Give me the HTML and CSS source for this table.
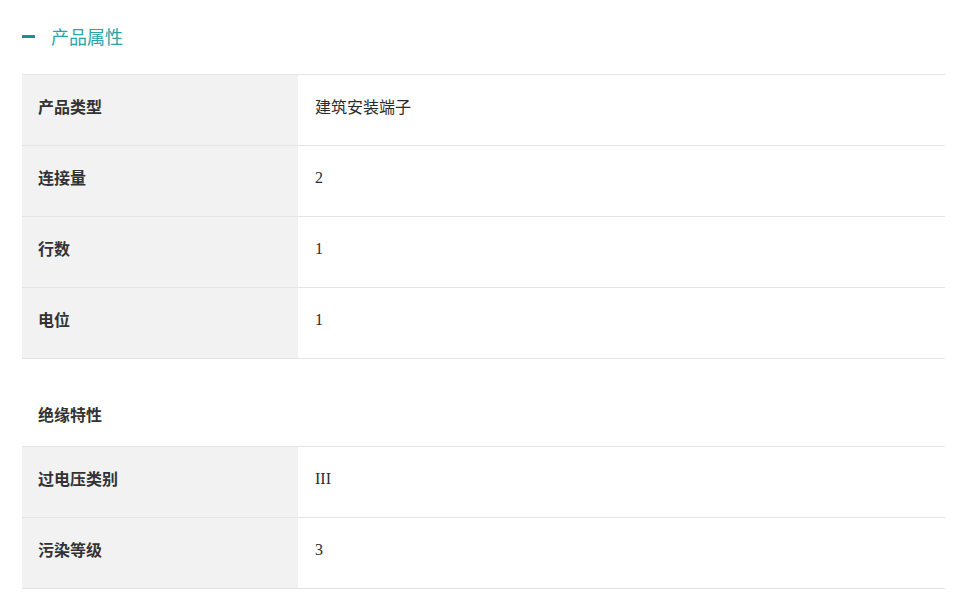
FILE: index.html
```html
<!DOCTYPE html>
<html lang="zh">
<head>
<meta charset="utf-8">
<link rel="stylesheet" href="styles.css">
</head>
<body>
<div class="panel">
  <div class="title"><span class="dash"></span><span class="title-text">产品属性</span></div>
  <div class="table">
    <div class="row"><div class="label">产品类型</div><div class="value cjk">建筑安装端子</div></div>
    <div class="row"><div class="label">连接量</div><div class="value">2</div></div>
    <div class="row"><div class="label">行数</div><div class="value">1</div></div>
    <div class="row"><div class="label">电位</div><div class="value">1</div></div>
    <div class="section">绝缘特性</div>
    <div class="row"><div class="label">过电压类别</div><div class="value">III</div></div>
    <div class="row"><div class="label">污染等级</div><div class="value">3</div></div>
  </div>
</div>
</body>
</html>
```
FILE: styles.css
```css
html, body { margin: 0; padding: 0; background: #fff; }
body { font-family: "Noto Sans CJK SC", "Noto Sans", sans-serif; color: #333; }
.panel { padding: 23px 16px 0 22px; }
.title { display: flex; align-items: center; height: 26px; }
.dash { width: 13px; height: 3px; background: #1a8f95; margin-right: 16px; }
.title-text { font-size: 18px; color: #2aa3a9; line-height: 26px; }
.table { margin-top: 25px; border-top: 1px solid #e4e4e8; }
.row { display: flex; border-bottom: 1px solid #e4e4e8; }
.label { width: 260px; flex: none; background: #f2f2f2; padding: 19px 0 27px 16px; font-size: 16px; font-weight: bold; line-height: 24px; color: #333; }
.value { flex: 1; padding: 20px 0 26px 17px; font-family: "Liberation Serif", "Noto Sans CJK SC", serif; font-size: 16px; line-height: 24px; color: #2b2b2b; }
.value.cjk { font-family: "Noto Sans CJK SC", sans-serif; padding: 19px 0 27px 17px; }
.section { padding: 43px 0 20px 16px; font-size: 16px; font-weight: bold; line-height: 24px; border-bottom: 1px solid #e4e4e8; }
```
